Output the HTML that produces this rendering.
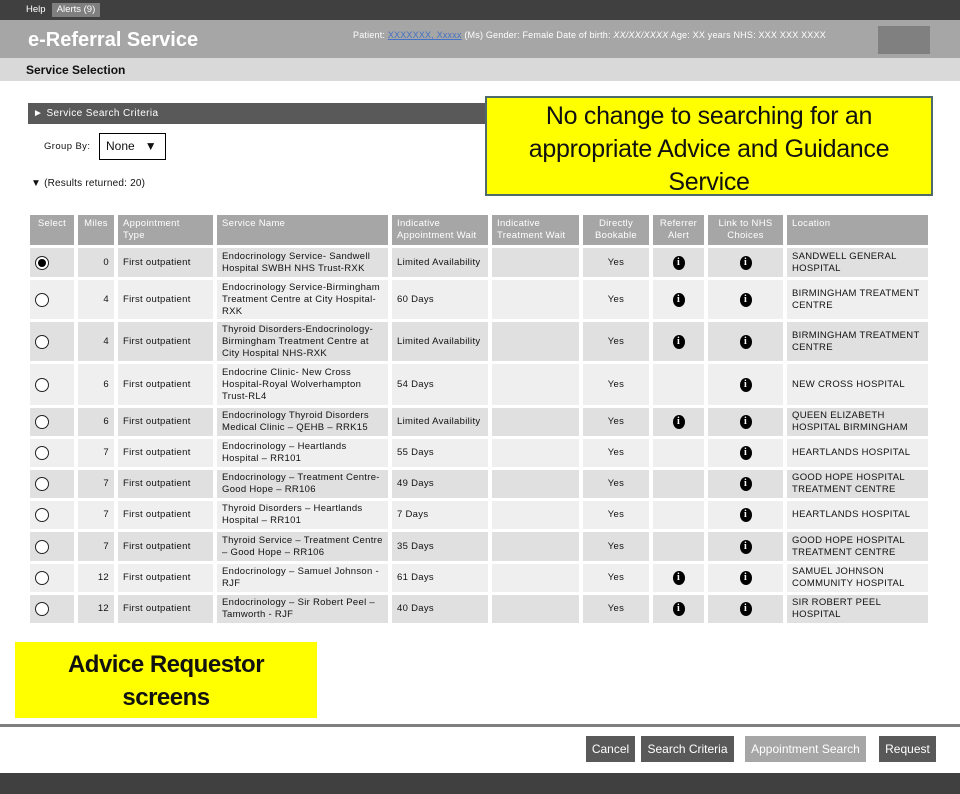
<!DOCTYPE html>
<html><head><meta charset="utf-8"><style>
*{margin:0;padding:0;box-sizing:border-box}
body{width:960px;height:794px;position:relative;background:#fff;font-family:"Liberation Sans",Arial,sans-serif;overflow:hidden;color:#111}
.a{position:absolute}
table{position:absolute;left:26px;top:212px;border-collapse:separate;border-spacing:4px 3px;table-layout:fixed;width:906px;font-size:9.5px;letter-spacing:.3px}
td,th{padding:0 5px;line-height:12px;vertical-align:middle;font-weight:normal;text-align:left}
th{background:#a6a6a6;color:#fff;vertical-align:top;padding-top:3px;height:30px}
tr.d td{background:#e0e0e0}
tr.l td{background:#efefef}
.c{text-align:center}.r{text-align:right}
.rad{display:inline-block;width:14px;height:14px;border:1px solid #222;border-radius:50%;background:#fff;position:relative;vertical-align:middle}
.rad.s::after{content:"";position:absolute;left:2px;top:2px;width:8px;height:8px;border-radius:50%;background:#000}
.i{display:inline-block;width:12px;height:14px;border-radius:50%;background:#000;color:#fff;font:bold 10px/14px "Liberation Serif",serif;text-align:center;vertical-align:middle}
.btn{position:absolute;top:736px;height:26px;color:#fff;font-size:12px;line-height:26px;text-align:center;background:#595959}
</style></head><body>
<div class="a" style="left:0;top:0;width:960px;height:20px;background:#404040"></div>
<div class="a" style="left:26px;top:4px;color:#fff;font-size:9.5px">Help</div>
<div class="a" style="left:52px;top:3px;width:48px;height:14px;background:#7f7f7f;color:#fff;font-size:9.5px;line-height:14px;text-align:center">Alerts (9)</div>
<div class="a" style="left:0;top:20px;width:960px;height:38px;background:#a6a6a6"></div>
<div class="a" style="left:28px;top:29px;color:#fff;font-size:20px;font-weight:bold">e-Referral Service</div>
<div class="a" style="left:353px;top:30px;color:#fff;font-size:9px;letter-spacing:.2px;white-space:nowrap">Patient: <span style="color:#4472c4;text-decoration:underline">XXXXXXX, Xxxxx</span> (Ms) Gender: Female Date of birth: <i>XX/XX/XXXX</i> Age: XX years NHS: XXX XXX XXXX</div>
<div class="a" style="left:878px;top:26px;width:52px;height:28px;background:#808080"></div>
<div class="a" style="left:0;top:58px;width:960px;height:23px;background:#d9d9d9"></div>
<div class="a" style="left:26px;top:63px;font-size:12px;font-weight:bold">Service Selection</div>
<div class="a" style="left:28px;top:103px;width:462px;height:21px;background:#595959;color:#fff;font-size:10px;line-height:21px;padding-left:5px;letter-spacing:.4px">► Service Search Criteria</div>
<div class="a" style="left:44px;top:141px;font-size:9.5px;letter-spacing:.4px">Group By:</div>
<div class="a" style="left:99px;top:133px;width:67px;height:27px;border:1px solid #000;font-size:12px;line-height:25px;padding-left:6px">None &nbsp;&nbsp;▼</div>
<div class="a" style="left:31px;top:178px;font-size:10px;letter-spacing:.2px">▼ (Results returned: 20)</div>
<div class="a" style="left:485px;top:96px;width:448px;height:100px;background:#ffff00;border:2px solid #4f6a6a;font-size:25px;line-height:33px;text-align:center;padding-top:2px;white-space:nowrap;letter-spacing:-.3px">No change to searching for an<br>appropriate Advice and Guidance<br>Service</div>
<table>
<colgroup><col style="width:44px"><col style="width:36px"><col style="width:95px"><col style="width:171px"><col style="width:96px"><col style="width:87px"><col style="width:66px"><col style="width:51px"><col style="width:75px"><col style="width:141px"></colgroup>
<tr><th class="c">Select</th><th class="c">Miles</th><th>Appointment<br>Type</th><th>Service Name</th><th>Indicative Appointment Wait</th><th>Indicative Treatment Wait</th><th class="c">Directly Bookable</th><th class="c">Referrer Alert</th><th class="c">Link to NHS Choices</th><th>Location</th></tr>
<tr class="d" style="height:29px"><td><span class="rad s"></span></td><td class="r">0</td><td>First outpatient</td><td>Endocrinology Service- Sandwell Hospital SWBH NHS Trust-RXK</td><td>Limited Availability</td><td></td><td class="c">Yes</td><td class="c"><span class="i">i</span></td><td class="c"><span class="i">i</span></td><td>SANDWELL GENERAL HOSPITAL</td></tr>
<tr class="l" style="height:39px"><td><span class="rad"></span></td><td class="r">4</td><td>First outpatient</td><td>Endocrinology Service-Birmingham Treatment Centre at City Hospital-RXK</td><td>60 Days</td><td></td><td class="c">Yes</td><td class="c"><span class="i">i</span></td><td class="c"><span class="i">i</span></td><td>BIRMINGHAM TREATMENT CENTRE</td></tr>
<tr class="d" style="height:39px"><td><span class="rad"></span></td><td class="r">4</td><td>First outpatient</td><td>Thyroid Disorders-Endocrinology-Birmingham Treatment Centre at City Hospital NHS-RXK</td><td>Limited Availability</td><td></td><td class="c">Yes</td><td class="c"><span class="i">i</span></td><td class="c"><span class="i">i</span></td><td>BIRMINGHAM TREATMENT CENTRE</td></tr>
<tr class="l" style="height:41px"><td><span class="rad"></span></td><td class="r">6</td><td>First outpatient</td><td>Endocrine Clinic- New Cross Hospital-Royal Wolverhampton Trust-RL4</td><td>54 Days</td><td></td><td class="c">Yes</td><td></td><td class="c"><span class="i">i</span></td><td>NEW CROSS HOSPITAL</td></tr>
<tr class="d" style="height:28px"><td><span class="rad"></span></td><td class="r">6</td><td>First outpatient</td><td>Endocrinology Thyroid Disorders Medical Clinic – QEHB – RRK15</td><td>Limited Availability</td><td></td><td class="c">Yes</td><td class="c"><span class="i">i</span></td><td class="c"><span class="i">i</span></td><td>QUEEN ELIZABETH HOSPITAL BIRMINGHAM</td></tr>
<tr class="l" style="height:28px"><td><span class="rad"></span></td><td class="r">7</td><td>First outpatient</td><td>Endocrinology – Heartlands Hospital – RR101</td><td>55 Days</td><td></td><td class="c">Yes</td><td></td><td class="c"><span class="i">i</span></td><td>HEARTLANDS HOSPITAL</td></tr>
<tr class="d" style="height:28px"><td><span class="rad"></span></td><td class="r">7</td><td>First outpatient</td><td>Endocrinology – Treatment Centre-Good Hope – RR106</td><td>49 Days</td><td></td><td class="c">Yes</td><td></td><td class="c"><span class="i">i</span></td><td>GOOD HOPE HOSPITAL TREATMENT CENTRE</td></tr>
<tr class="l" style="height:28px"><td><span class="rad"></span></td><td class="r">7</td><td>First outpatient</td><td>Thyroid Disorders – Heartlands Hospital – RR101</td><td>7 Days</td><td></td><td class="c">Yes</td><td></td><td class="c"><span class="i">i</span></td><td>HEARTLANDS HOSPITAL</td></tr>
<tr class="d" style="height:29px"><td><span class="rad"></span></td><td class="r">7</td><td>First outpatient</td><td>Thyroid Service – Treatment Centre – Good Hope – RR106</td><td>35 Days</td><td></td><td class="c">Yes</td><td></td><td class="c"><span class="i">i</span></td><td>GOOD HOPE HOSPITAL TREATMENT CENTRE</td></tr>
<tr class="l" style="height:28px"><td><span class="rad"></span></td><td class="r">12</td><td>First outpatient</td><td>Endocrinology – Samuel Johnson - RJF</td><td>61 Days</td><td></td><td class="c">Yes</td><td class="c"><span class="i">i</span></td><td class="c"><span class="i">i</span></td><td>SAMUEL JOHNSON COMMUNITY HOSPITAL</td></tr>
<tr class="d" style="height:28px"><td><span class="rad"></span></td><td class="r">12</td><td>First outpatient</td><td>Endocrinology – Sir Robert Peel – Tamworth - RJF</td><td>40 Days</td><td></td><td class="c">Yes</td><td class="c"><span class="i">i</span></td><td class="c"><span class="i">i</span></td><td>SIR ROBERT PEEL HOSPITAL</td></tr>
</table>
<div class="a" style="left:15px;top:642px;width:302px;height:76px;background:#ffff00;font-size:24px;font-weight:bold;line-height:33px;text-align:center;padding-top:6px;letter-spacing:-.5px">Advice Requestor<br>screens</div>
<div class="a" style="left:0;top:724px;width:960px;height:3px;background:#7f7f7f"></div>
<div class="btn" style="left:586px;width:49px">Cancel</div>
<div class="btn" style="left:641px;width:93px">Search Criteria</div>
<div class="btn" style="left:745px;width:121px;background:#a6a6a6">Appointment Search</div>
<div class="btn" style="left:879px;width:57px">Request</div>
<div class="a" style="left:0;top:773px;width:960px;height:21px;background:#404040"></div>
</body></html>
